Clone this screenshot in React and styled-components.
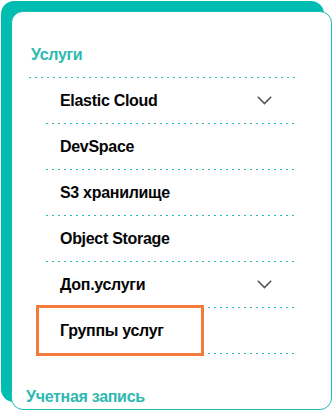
import React from 'react';
import styled, { createGlobalStyle } from 'styled-components';

const GlobalStyle = createGlobalStyle`
  html, body {
    margin: 0;
    padding: 0;
    background: #ffffff;
    overflow: hidden;
  }
  body {
    font-family: "Liberation Sans", Arial, sans-serif;
  }
`;

const Page = styled.div`
  padding: 11px 0 0 11px;
  width: 332px;
  height: 410px;
  box-sizing: border-box;
`;

const Card = styled.div`
  width: 321px;
  height: 399px;
  box-sizing: border-box;
  background: #ffffff;
  border: 1px solid #1bbcb3;
  border-radius: 12px;
  box-shadow: -9px -9px 0 1px #00bdb2;
  padding: 33px 36px 0 17px;
  overflow: hidden;
`;

const Section = styled.div`
  & + & {
    margin-top: 33px;
  }
`;

const Heading = styled.div`
  font-size: 16px;
  font-weight: 700;
  line-height: 20px;
  color: #2db9b1;
  padding: 0 0 ${(p) => (p.$last ? '0' : '12px')} ${(p) => (p.$last ? '0' : '2px')};
  margin-left: ${(p) => (p.$last ? '-3px' : '0')};
  letter-spacing: -0.3px;
`;

const Dots = styled.div`
  height: 1px;
  background-image: repeating-linear-gradient(
    90deg,
    rgb(38, 190, 180) 0px,
    rgb(38, 190, 180) 2px,
    rgba(255, 255, 255, 0) 2px,
    rgba(255, 255, 255, 0) 6px
  );
`;

const List = styled.div`
  padding-left: 17px;
`;

const Row = styled.div`
  position: relative;
  height: 45px;
  display: flex;
  align-items: center;
  justify-content: space-between;
  padding: 0 23px 0 14px;
  font-size: 16px;
  font-weight: 700;
  color: #050505;
  letter-spacing: -0.3px;
`;

const Highlight = styled.div`
  position: absolute;
  left: -10px;
  top: -3px;
  width: 168px;
  height: 51px;
  box-sizing: border-box;
  border: 3px solid #f47a3c;
  pointer-events: none;
`;

const Chevron = () => (
  <svg width="15" height="9" viewBox="0 0 15 9" fill="none">
    <path d="M0.8 0.8 L7.5 7.6 L14.2 0.8" stroke="#555" strokeWidth="1.6" />
  </svg>
);

const items = [
  { label: 'Elastic Cloud', sub: true },
  { label: 'DevSpace' },
  { label: 'S3 хранилище' },
  { label: 'Object Storage' },
  { label: 'Доп.услуги', sub: true },
  { label: 'Группы услуг', active: true },
];

export default function App() {
  return (
    <>
      <GlobalStyle />
      <Page>
        <Card>
          <Section>
            <Heading>Услуги</Heading>
            <Dots />
            <List>
              {items.map((it) => (
                <React.Fragment key={it.label}>
                  <Row>
                    <span>{it.label}</span>
                    {it.sub && <Chevron />}
                    {it.active && <Highlight />}
                  </Row>
                  <Dots />
                </React.Fragment>
              ))}
            </List>
          </Section>
          <Section>
            <Heading $last>Учетная запись</Heading>
          </Section>
        </Card>
      </Page>
    </>
  );
}
